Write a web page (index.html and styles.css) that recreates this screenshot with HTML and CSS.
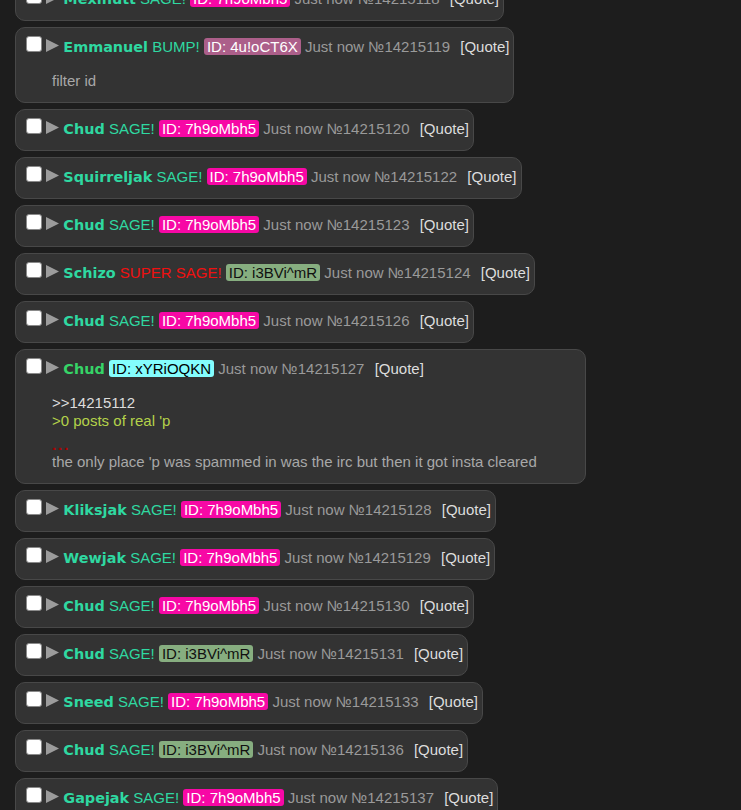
FILE: index.html
```html
<!DOCTYPE html>
<html lang="en">
<head>
    <meta charset="UTF-8">
    <meta name="viewport" content="width=device-width, initial-scale=1.0">
    <title>Thread</title>
    <link rel="stylesheet" href="styles.css">
</head>
<body>
    <div class="thread">
        <div class="post">
            <div class="post-head">
                <input type="checkbox" class="sel"> <svg class="toggle" viewBox="0 0 13 13"><polygon points="0,0 13,6.5 0,13"/></svg> <span class="name">Mexihutt</span> <span class="sage">SAGE!</span> <span class="uid uid-pink">ID: 7h9oMbh5</span> <span class="time">Just now</span> <span class="num">№14215118</span> <a class="quote">[Quote]</a>
            </div>
        </div>

        <div class="post">
            <div class="post-head">
                <input type="checkbox" class="sel"> <svg class="toggle" viewBox="0 0 13 13"><polygon points="0,0 13,6.5 0,13"/></svg> <span class="name">Emmanuel</span> <span class="sage">BUMP!</span> <span class="uid uid-mauve">ID: 4u!oCT6X</span> <span class="time">Just now</span> <span class="num">№14215119</span> <a class="quote">[Quote]</a>
            </div>
            <div class="post-body">
                <div class="line">filter id</div>
            </div>
        </div>

        <div class="post">
            <div class="post-head">
                <input type="checkbox" class="sel"> <svg class="toggle" viewBox="0 0 13 13"><polygon points="0,0 13,6.5 0,13"/></svg> <span class="name">Chud</span> <span class="sage">SAGE!</span> <span class="uid uid-pink">ID: 7h9oMbh5</span> <span class="time">Just now</span> <span class="num">№14215120</span> <a class="quote">[Quote]</a>
            </div>
        </div>

        <div class="post">
            <div class="post-head">
                <input type="checkbox" class="sel"> <svg class="toggle" viewBox="0 0 13 13"><polygon points="0,0 13,6.5 0,13"/></svg> <span class="name">Squirreljak</span> <span class="sage">SAGE!</span> <span class="uid uid-pink">ID: 7h9oMbh5</span> <span class="time">Just now</span> <span class="num">№14215122</span> <a class="quote">[Quote]</a>
            </div>
        </div>

        <div class="post">
            <div class="post-head">
                <input type="checkbox" class="sel"> <svg class="toggle" viewBox="0 0 13 13"><polygon points="0,0 13,6.5 0,13"/></svg> <span class="name">Chud</span> <span class="sage">SAGE!</span> <span class="uid uid-pink">ID: 7h9oMbh5</span> <span class="time">Just now</span> <span class="num">№14215123</span> <a class="quote">[Quote]</a>
            </div>
        </div>

        <div class="post">
            <div class="post-head">
                <input type="checkbox" class="sel"> <svg class="toggle" viewBox="0 0 13 13"><polygon points="0,0 13,6.5 0,13"/></svg> <span class="name">Schizo</span> <span class="sage super">SUPER SAGE!</span> <span class="uid uid-sage">ID: i3BVi^mR</span> <span class="time">Just now</span> <span class="num">№14215124</span> <a class="quote">[Quote]</a>
            </div>
        </div>

        <div class="post">
            <div class="post-head">
                <input type="checkbox" class="sel"> <svg class="toggle" viewBox="0 0 13 13"><polygon points="0,0 13,6.5 0,13"/></svg> <span class="name">Chud</span> <span class="sage">SAGE!</span> <span class="uid uid-pink">ID: 7h9oMbh5</span> <span class="time">Just now</span> <span class="num">№14215126</span> <a class="quote">[Quote]</a>
            </div>
        </div>

        <div class="post">
            <div class="post-head">
                <input type="checkbox" class="sel"> <svg class="toggle" viewBox="0 0 13 13"><polygon points="0,0 13,6.5 0,13"/></svg> <span class="name name-green">Chud</span> <span class="uid uid-cyan">ID: xYRiOQKN</span> <span class="time">Just now</span> <span class="num">№14215127</span> <a class="quote">[Quote]</a>
            </div>
            <div class="post-body">
                <div class="line reply">&gt;&gt;14215112</div>
                <div class="line greentext">&gt;0 posts of real 'p</div>
                <div class="line dots">...</div>
                <div class="line">the only place 'p was spammed in was the irc but then it got insta cleared</div>
            </div>
        </div>

        <div class="post">
            <div class="post-head">
                <input type="checkbox" class="sel"> <svg class="toggle" viewBox="0 0 13 13"><polygon points="0,0 13,6.5 0,13"/></svg> <span class="name">Kliksjak</span> <span class="sage">SAGE!</span> <span class="uid uid-pink">ID: 7h9oMbh5</span> <span class="time">Just now</span> <span class="num">№14215128</span> <a class="quote">[Quote]</a>
            </div>
        </div>

        <div class="post">
            <div class="post-head">
                <input type="checkbox" class="sel"> <svg class="toggle" viewBox="0 0 13 13"><polygon points="0,0 13,6.5 0,13"/></svg> <span class="name">Wewjak</span> <span class="sage">SAGE!</span> <span class="uid uid-pink">ID: 7h9oMbh5</span> <span class="time">Just now</span> <span class="num">№14215129</span> <a class="quote">[Quote]</a>
            </div>
        </div>

        <div class="post">
            <div class="post-head">
                <input type="checkbox" class="sel"> <svg class="toggle" viewBox="0 0 13 13"><polygon points="0,0 13,6.5 0,13"/></svg> <span class="name">Chud</span> <span class="sage">SAGE!</span> <span class="uid uid-pink">ID: 7h9oMbh5</span> <span class="time">Just now</span> <span class="num">№14215130</span> <a class="quote">[Quote]</a>
            </div>
        </div>

        <div class="post">
            <div class="post-head">
                <input type="checkbox" class="sel"> <svg class="toggle" viewBox="0 0 13 13"><polygon points="0,0 13,6.5 0,13"/></svg> <span class="name">Chud</span> <span class="sage">SAGE!</span> <span class="uid uid-sage">ID: i3BVi^mR</span> <span class="time">Just now</span> <span class="num">№14215131</span> <a class="quote">[Quote]</a>
            </div>
        </div>

        <div class="post">
            <div class="post-head">
                <input type="checkbox" class="sel"> <svg class="toggle" viewBox="0 0 13 13"><polygon points="0,0 13,6.5 0,13"/></svg> <span class="name">Sneed</span> <span class="sage">SAGE!</span> <span class="uid uid-pink">ID: 7h9oMbh5</span> <span class="time">Just now</span> <span class="num">№14215133</span> <a class="quote">[Quote]</a>
            </div>
        </div>

        <div class="post">
            <div class="post-head">
                <input type="checkbox" class="sel"> <svg class="toggle" viewBox="0 0 13 13"><polygon points="0,0 13,6.5 0,13"/></svg> <span class="name">Chud</span> <span class="sage">SAGE!</span> <span class="uid uid-sage">ID: i3BVi^mR</span> <span class="time">Just now</span> <span class="num">№14215136</span> <a class="quote">[Quote]</a>
            </div>
        </div>

        <div class="post">
            <div class="post-head">
                <input type="checkbox" class="sel"> <svg class="toggle" viewBox="0 0 13 13"><polygon points="0,0 13,6.5 0,13"/></svg> <span class="name">Gapejak</span> <span class="sage">SAGE!</span> <span class="uid uid-pink">ID: 7h9oMbh5</span> <span class="time">Just now</span> <span class="num">№14215137</span> <a class="quote">[Quote]</a>
            </div>
        </div>
    </div>
</body>
</html>
```

FILE: styles.css
```css
body {
    margin: 0;
    padding: 0 15px;
    background-color: #1d1d1d;
    font-family: "Liberation Sans", Arial, sans-serif;
    font-size: 15px;
    overflow: hidden;
}
.thread {
    display: flex;
    flex-direction: column;
    align-items: flex-start;
    gap: 6px;
    margin-top: -21px;
}
.post {
    background-color: #333;
    border: 1px solid #484848;
    border-radius: 10px;
    padding: 8px 4px 12px 10px;
}
.post-head {
    height: 20px;
    white-space: nowrap;
}
.sel {
    appearance: none;
    -webkit-appearance: none;
    width: 16px;
    height: 16px;
    margin: 0;
    background-color: #fff;
    border: 1px solid #8a8a8a;
    border-radius: 3px;
    vertical-align: baseline;
}
.toggle {
    width: 13px;
    height: 13px;
    fill: #9c9c9c;
    vertical-align: baseline;
}
.name {
    font-family: "DejaVu Sans", Verdana, sans-serif;
    font-weight: bold;
    font-size: 14.4px;
    color: #2fd8a1;
}
.name-green {
    color: #36d467;
}
.sage {
    color: #2fd8a1;
}
.super {
    color: #f01010;
}
.uid {
    padding: 0 3px;
    border-radius: 3px;
    color: #fff;
}
.uid-pink {
    background-color: #f708a5;
}
.uid-mauve {
    background-color: #ac5f8a;
}
.uid-sage {
    background-color: #87ae80;
    color: #111;
}
.uid-cyan {
    background-color: #84fdfd;
    color: #000;
}
.time,
.num {
    color: #9a9a9a;
}
.quote {
    margin-left: 6px;
    color: #ddd;
    cursor: pointer;
}
.post-body {
    margin: 16px 44px 0 26px;
    color: #a8a8a8;
}
.line {
    line-height: 18px;
}
.reply {
    color: #ddd;
}
.greentext {
    color: #b3d24a;
}
.dots {
    padding-top: 6px;
    line-height: 17px;
    color: #b00000;
    font-weight: bold;
    letter-spacing: 1.9px;
}
```
